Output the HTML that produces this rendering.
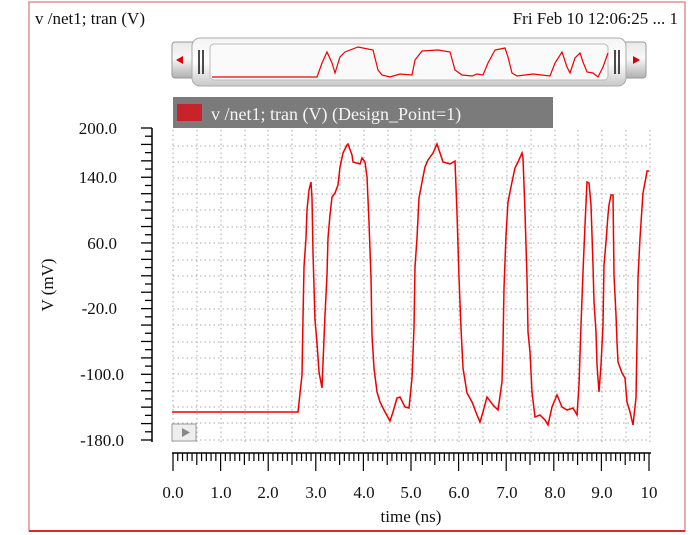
<!DOCTYPE html>
<html><head><style>
body{margin:0;background:#fff;width:699px;height:535px;overflow:hidden;font-family:"Liberation Serif",serif;}
svg{position:absolute;left:0;top:0}
</style></head><body>
<svg width="699" height="535" viewBox="0 0 699 535">
<defs>
<linearGradient id="g1" x1="0" y1="0" x2="0" y2="1"><stop offset="0" stop-color="#f4f4f4"/><stop offset=".5" stop-color="#fff"/><stop offset="1" stop-color="#c8c8c8"/></linearGradient>
<linearGradient id="g2" x1="0" y1="0" x2="0" y2="1"><stop offset="0" stop-color="#e8e8e8"/><stop offset=".45" stop-color="#f8f8f8"/><stop offset="1" stop-color="#b0b0b0"/></linearGradient>
</defs>
<rect x="29" y="2" width="656" height="529" fill="#fff" stroke="#e09090" stroke-width="1.5"/>
<line x1="29" y1="531" x2="685" y2="531" stroke="#d03030" stroke-width="2"/>
<text x="35" y="24" font-size="17" fill="#111">v /net1; tran (V)</text>
<text x="678" y="24" font-size="17" fill="#111" text-anchor="end">Fri Feb 10 12:06:25 ...  1</text>
<!-- slider -->
<rect x="172" y="42" width="474" height="36" rx="3" fill="url(#g2)" stroke="#999"/>
<rect x="192" y="38" width="434" height="48" rx="8" fill="url(#g1)" stroke="#aaa"/>
<rect x="210" y="44" width="398" height="36" rx="4" fill="#fafafa" stroke="#bbb"/>
<polygon points="176,60 183,56 183,64" fill="#d00"/>
<polygon points="640,60 633,56 633,64" fill="#d00"/>
<line x1="199" y1="50" x2="199" y2="74" stroke="#111" stroke-width="1.5"/><line x1="203" y1="50" x2="203" y2="74" stroke="#111" stroke-width="1.5"/>
<line x1="615" y1="50" x2="615" y2="74" stroke="#111" stroke-width="1.5"/><line x1="619" y1="50" x2="619" y2="74" stroke="#111" stroke-width="1.5"/>
<polyline fill="none" stroke="#e00" stroke-width="1.2" points="212,77 317,77 322,63 327,52 332,63 335,73 340,57 345,52 358,47 373,50 378,70 382,75 390,77 400,74 412,75 415,60 422,51 438,50 450,52 455,70 462,75 472,76 477,74 483,75 488,63 495,50 505,48 508,57 512,73 517,76 533,74 550,76 555,63 562,52 567,67 570,73 575,58 580,53 583,62 587,72 593,73 598,77 603,67 608,53"/>
<!-- legend -->
<rect x="173" y="97" width="380" height="31" fill="#7b7b7b"/>
<rect x="177" y="104" width="25" height="17" fill="#c8222a"/>
<text x="211" y="120" font-size="18" fill="#f4f4f4">v /net1; tran (V) (Design_Point=1)</text>
<!-- grid -->
<g stroke="#aaa" stroke-width="1" stroke-dasharray="1.5,3">
<line x1="173" y1="146" x2="650" y2="146"/><line x1="173" y1="162" x2="650" y2="162"/><line x1="173" y1="178" x2="650" y2="178"/><line x1="173" y1="194" x2="650" y2="194"/><line x1="173" y1="210" x2="650" y2="210"/><line x1="173" y1="227" x2="650" y2="227"/><line x1="173" y1="243" x2="650" y2="243"/><line x1="173" y1="260" x2="650" y2="260"/><line x1="173" y1="276" x2="650" y2="276"/><line x1="173" y1="292" x2="650" y2="292"/><line x1="173" y1="309" x2="650" y2="309"/><line x1="173" y1="325" x2="650" y2="325"/><line x1="173" y1="342" x2="650" y2="342"/><line x1="173" y1="358" x2="650" y2="358"/><line x1="173" y1="374" x2="650" y2="374"/><line x1="173" y1="391" x2="650" y2="391"/><line x1="173" y1="407" x2="650" y2="407"/><line x1="173" y1="423" x2="650" y2="423"/><line x1="173" y1="440" x2="650" y2="440"/>
<line x1="173" y1="130" x2="173" y2="442"/><line x1="197" y1="130" x2="197" y2="442"/><line x1="221" y1="130" x2="221" y2="442"/><line x1="245" y1="130" x2="245" y2="442"/><line x1="268" y1="130" x2="268" y2="442"/><line x1="292" y1="130" x2="292" y2="442"/><line x1="316" y1="130" x2="316" y2="442"/><line x1="340" y1="130" x2="340" y2="442"/><line x1="364" y1="130" x2="364" y2="442"/><line x1="388" y1="130" x2="388" y2="442"/><line x1="411" y1="130" x2="411" y2="442"/><line x1="435" y1="130" x2="435" y2="442"/><line x1="459" y1="130" x2="459" y2="442"/><line x1="483" y1="130" x2="483" y2="442"/><line x1="507" y1="130" x2="507" y2="442"/><line x1="531" y1="130" x2="531" y2="442"/><line x1="555" y1="130" x2="555" y2="442"/><line x1="578" y1="130" x2="578" y2="442"/><line x1="602" y1="130" x2="602" y2="442"/><line x1="626" y1="130" x2="626" y2="442"/><line x1="650" y1="130" x2="650" y2="442"/>
</g>
<!-- y axis -->
<line x1="152" y1="128" x2="152" y2="442" stroke="#000" stroke-width="1.5"/>
<g stroke="#000" stroke-width="1.3" id="yt"></g>
<g font-size="17" fill="#111" text-anchor="end">
<text x="117" y="134">200.0</text><text x="117" y="183">140.0</text><text x="117" y="249">60.0</text><text x="117" y="314">-20.0</text><text x="124" y="380">-100.0</text><text x="124" y="446">-180.0</text>
</g>
<text transform="translate(53,285) rotate(-90)" font-size="17" fill="#111" text-anchor="middle">V (mV)</text>
<!-- x axis -->
<line x1="172" y1="453" x2="651" y2="453" stroke="#000" stroke-width="1.5"/>
<g id="xt" stroke="#000" stroke-width="1.2"></g>
<g font-size="17" fill="#111" text-anchor="middle">
<text x="173" y="498">0.0</text><text x="221" y="498">1.0</text><text x="268" y="498">2.0</text><text x="316" y="498">3.0</text><text x="364" y="498">4.0</text><text x="411" y="498">5.0</text><text x="459" y="498">6.0</text><text x="507" y="498">7.0</text><text x="555" y="498">8.0</text><text x="602" y="498">9.0</text><text x="649" y="498">10</text>
</g>
<text x="411" y="522" font-size="17" fill="#111" text-anchor="middle">time (ns)</text>
<!-- play button -->
<rect x="172" y="424" width="24" height="17" fill="#eee" stroke="#999"/>
<polygon points="182,428 190,432.5 182,437" fill="#888"/>
<!-- waveform -->
<polyline fill="none" stroke="#e00" stroke-width="1.5" points="172,412 298,412 302,375 303,318 304,267 306,238 307,210 309,190 311,182 312,198 313,253 315,320 317,343 319,372 322,388 323,363 325,315 327,275 328,238 330,215 332,197 335,193 338,185 340,167 343,153 347,145 348,144 352,155 353,162 360,164 362,158 365,162 367,177 369,222 371,278 372,335 374,368 377,392 380,402 385,412 390,421 393,412 397,398 400,397 405,407 409,408 412,378 414,328 415,267 417,238 419,198 423,177 425,167 428,160 433,153 437,144 440,153 443,162 450,164 455,161 457,213 459,278 461,328 463,368 467,393 472,402 477,415 480,422 483,412 487,397 493,405 498,410 502,382 503,345 504,288 506,235 508,202 512,182 515,168 518,162 522,153 523,158 525,212 527,278 528,332 530,352 532,392 535,417 540,415 545,420 548,425 552,407 557,395 562,407 567,410 573,408 577,415 579,385 581,325 583,272 585,225 587,182 589,183 591,205 593,265 594,302 596,332 597,365 599,392 601,365 603,325 604,265 606,242 608,215 609,205 611,195 613,195 614,275 616,315 617,342 618,362 622,373 625,378 627,402 630,412 633,425 636,398 637,342 638,278 640,238 642,208 643,193 646,177 647,171 649,171"/>
</svg>
<script>
var ns="http://www.w3.org/2000/svg";
var yt=document.getElementById("yt");
for(var i=0;i<=38;i++){var y=128+i*312/38;var l=document.createElementNS(ns,"line");var maj=(i%2==0);l.setAttribute("x1",maj?141:145);l.setAttribute("x2",152);l.setAttribute("y1",y);l.setAttribute("y2",y);yt.appendChild(l);}
var xt=document.getElementById("xt");
for(var i=0;i<=100;i++){var x=173+i*476/100;var l=document.createElementNS(ns,"line");var len=(i%10==0)?18:((i%5==0)?12:8);l.setAttribute("x1",x);l.setAttribute("x2",x);l.setAttribute("y1",453);l.setAttribute("y2",453+len);xt.appendChild(l);}
</script>
</body></html>
